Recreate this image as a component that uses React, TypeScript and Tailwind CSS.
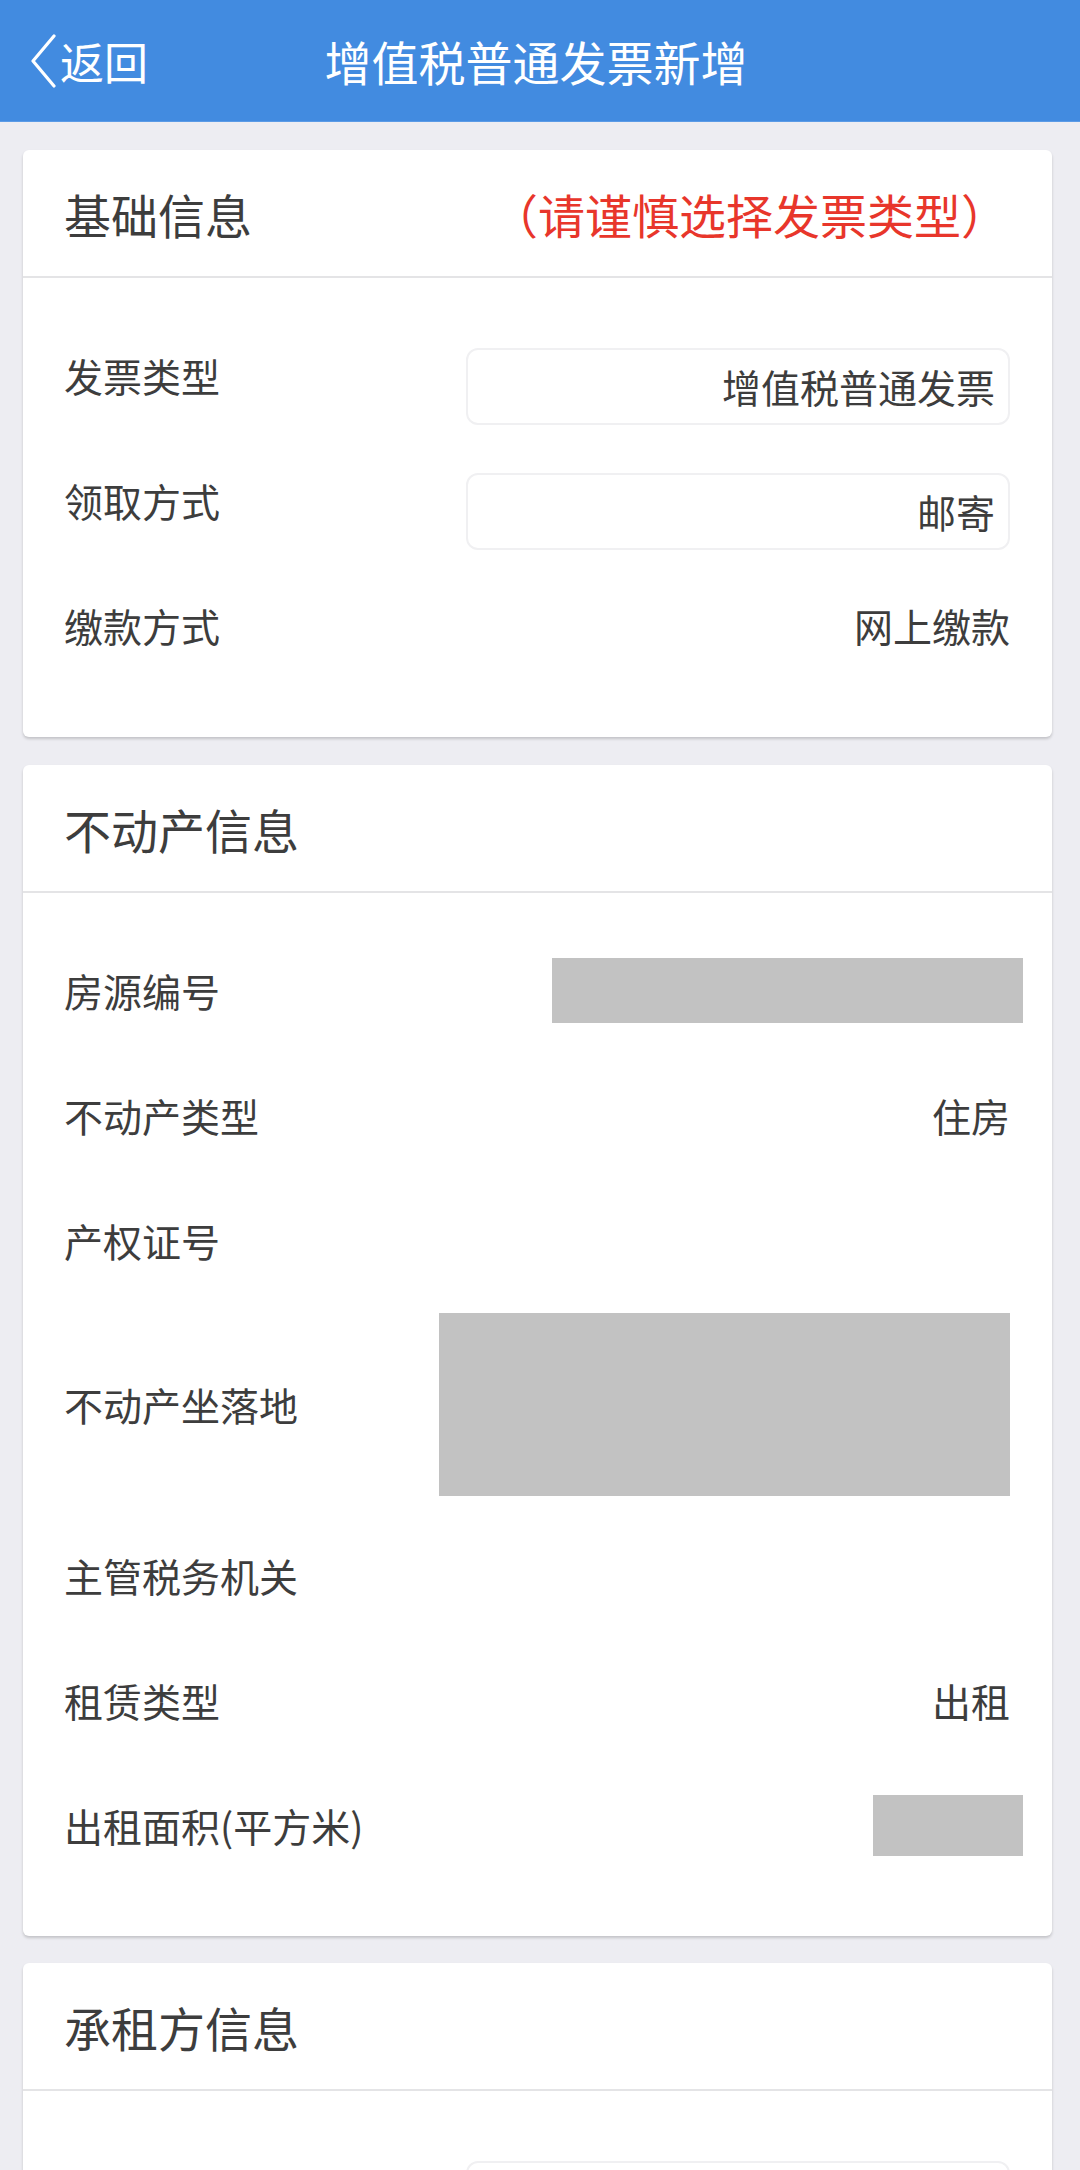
import React from "react";

const font = "font-['Noto_Sans_CJK_SC','Noto_Sans',sans-serif]";

function Card({ title, extra, children, bodyClass }: { title: string; extra?: React.ReactNode; children: React.ReactNode; bodyClass: string }) {
  return (
    <div className="ml-[23px] w-[1029px] rounded-[6px] bg-white shadow-[0_2px_3px_rgba(0,0,0,0.18)]">
      <div className="flex h-[128px] items-center justify-between border-b-2 border-[#E4E4E6] pl-[41px] pr-[44px]">
        <span className="text-[47px] leading-none text-[#3D3D3D]">{title}</span>
        {extra}
      </div>
      <div className={bodyClass}>{children}</div>
    </div>
  );
}

function BoxRow({ label, value }: { label: string; value: string }) {
  return (
    <div className="flex h-[125px] items-center justify-between pl-[41px] pr-[42px]">
      <span className="mb-[22px] text-[39px] leading-none text-[#3D3D3D]">{label}</span>
      <div className="flex h-[77px] w-[544px] items-center justify-end rounded-[12px] border-2 border-[#F0F0F2] pr-[13px] text-[39px] leading-none text-[#3D3D3D]">
        {value}
      </div>
    </div>
  );
}

function TextRow({ label, value, shift }: { label: string; value?: string; shift?: boolean }) {
  return (
    <div className="flex h-[125px] items-center justify-between pl-[41px] pr-[42px]">
      <span className={(shift ? "mb-[22px] " : "") + "text-[39px] leading-none text-[#3D3D3D]"}>{label}</span>
      {value ? (
        <span className={(shift ? "mb-[22px] " : "") + "text-[39px] leading-none text-[#3D3D3D]"}>{value}</span>
      ) : null}
    </div>
  );
}

export default function App() {
  return (
    <div className={`${font} min-h-[2400px] w-[1080px] bg-[#EDEDF2]`}>
      <div className="grid h-[122px] grid-cols-[1fr_auto_1fr] items-center border-b border-[#5B9BE6] bg-[#428BE0] text-white">
        <div className="flex items-center pl-[29px]">
          <svg width="28" height="54" viewBox="0 0 28 54" className="mr-[3px]">
            <polyline points="25,2 4,27 25,52" fill="none" stroke="white" strokeWidth="3.2" strokeLinecap="round" strokeLinejoin="round" />
          </svg>
          <span className="text-[44px] leading-none">返回</span>
        </div>
        <div className="pr-[8px] text-[47px] leading-none">增值税普通发票新增</div>
        <div />
      </div>

      <div className="mt-[28px]">
        <Card
          title="基础信息"
          extra={<span className="text-[47px] leading-none text-[#E8362B]">（请谨慎选择发票类型）</span>}
          bodyClass="pt-[46px] pb-[38px]"
        >
          <BoxRow label="发票类型" value="增值税普通发票" />
          <BoxRow label="领取方式" value="邮寄" />
          <TextRow label="缴款方式" value="网上缴款" shift />
        </Card>
      </div>

      <div className="mt-[28px]">
        <Card title="不动产信息" bodyClass="pt-[35px] pb-[48px]">
          <div className="flex h-[125px] items-center justify-between pl-[41px] pr-[42px]">
            <span className="text-[39px] leading-none text-[#3D3D3D]">房源编号</span>
            <div className="-mr-[13px] h-[65px] w-[471px] bg-[#C2C2C2]" />
          </div>
          <TextRow label="不动产类型" value="住房" />
          <TextRow label="产权证号" />
          <div className="flex h-[210px] items-center justify-between pb-[8px] pl-[41px] pr-[42px]">
            <span className="text-[39px] leading-none text-[#3D3D3D]">不动产坐落地</span>
            <div className="h-[183px] w-[571px] bg-[#C2C2C2]" />
          </div>
          <TextRow label="主管税务机关" />
          <TextRow label="租赁类型" value="出租" />
          <div className="flex h-[125px] items-center justify-between pl-[41px] pr-[42px]">
            <span className="text-[39px] leading-none text-[#3D3D3D]">出租面积(平方米)</span>
            <div className="-mr-[13px] h-[61px] w-[150px] bg-[#C2C2C2]" />
          </div>
        </Card>
      </div>

      <div className="mt-[27px]">
        <Card title="承租方信息" bodyClass="pt-[46px] pb-[38px]">
          <BoxRow label="承租方名称" value="" />
        </Card>
      </div>
    </div>
  );
}
